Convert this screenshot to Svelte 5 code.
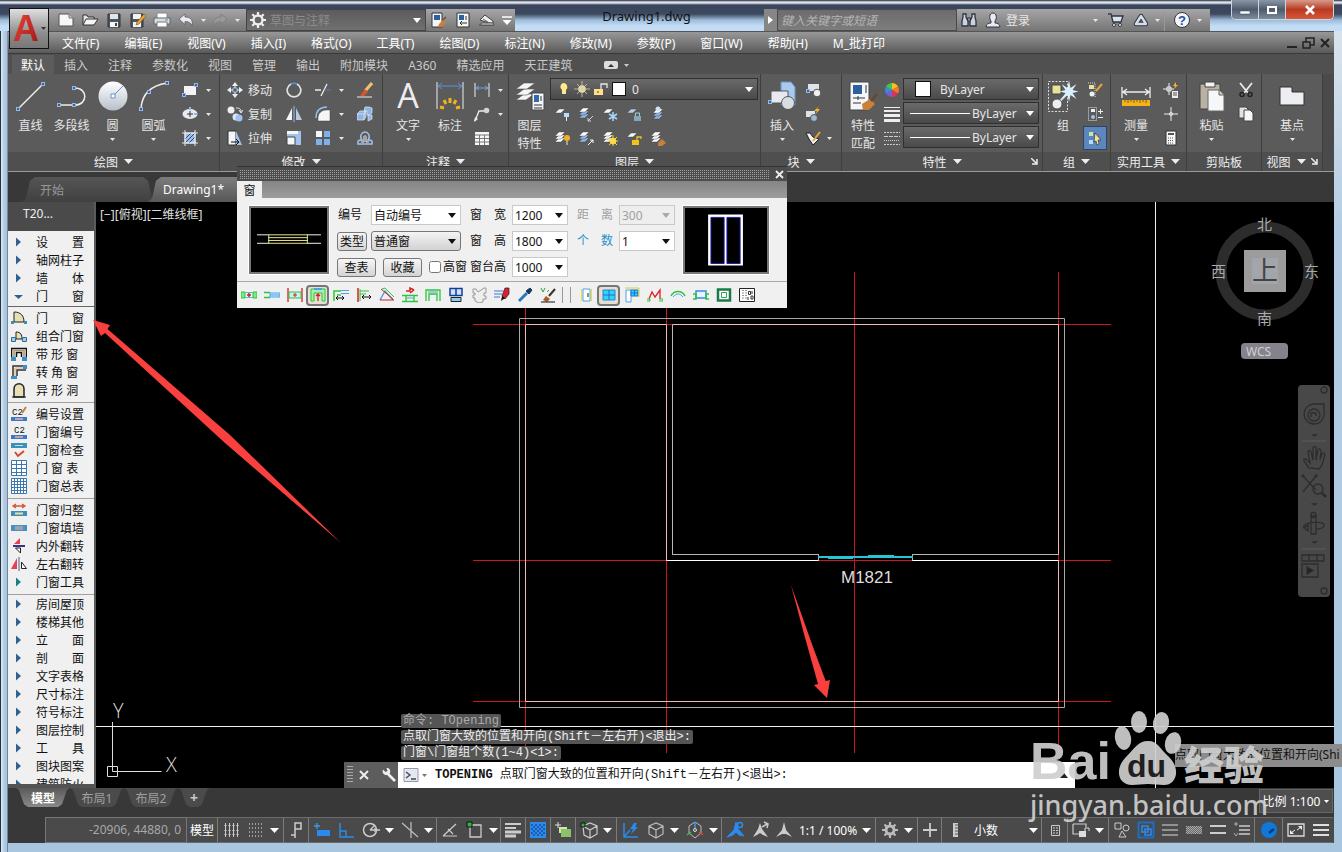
<script>
  const node = (x, y) => `<rect x="${x - 1.5}" y="${y - 1.5}" width="3" height="3" fill="#4a5f80" stroke="#8fbcf0"/>`;
  const sheet = (x, y, f = '#f4f6f8') => `<path d="M${x} ${y + 4}l4-4h6l-4 4z" fill="${f}" stroke="#3a3a3a" stroke-width=".4"/>`;
  const stack = (f) => sheet(1, 8, f) + sheet(1, 5, f) + sheet(1, 2, '#fff');
  const wallEnds = '<path d="M0 5h4v6h-4zM12 5h4v6h-4z" fill="#7dea80" stroke="#2fc53a"/>';

  const icons = {
    // quick access
    newfile: [16, 16, '<path d="M1 2h10l4 4v8h-14z" fill="#f7f7f7" stroke="#555"/><path d="M11 2v4h4" fill="#ccc" stroke="#777"/>'],
    open: [18, 16, '<path d="M2 13v-10h4l1 2h6v2" fill="#e4e4e4" stroke="#333"/><path d="M2 13l3-6h12l-4 6z" fill="#f5f5f5" stroke="#333"/>'],
    save: [16, 16, '<path d="M2 2h12v13h-12z" fill="#4d545c" stroke="#333"/><path d="M4 2h8v5h-8z" fill="#dfe7ee"/><path d="M4 10h8v5h-8z" fill="#f5f5f5"/><path d="M9 11h2v3h-2z" fill="#444"/>'],
    saveas: [18, 16, '<path d="M2 2h12v13h-12z" fill="#4d545c" stroke="#333"/><path d="M4 2h8v5h-8zM4 10h8v5h-8z" fill="#f0f3f6"/><path d="M15 2l2 2-7 8-3 1 1-3z" fill="#e9a43a" stroke="#7a4a10" stroke-width=".6"/>'],
    print: [18, 16, '<path d="M4 1h10v6h-10z" fill="#fff" stroke="#888"/><path d="M1 6h16v6h-16z" fill="#d9dde2" stroke="#666"/><path d="M4 10h10v5h-10z" fill="#fff" stroke="#777"/><path d="M12 8h3" stroke="#4b8bd8"/>'],
    undo: [16, 16, '<path d="M1 7l6-5v3c6 0 8 3 7 9-1-3-3-4.500-7-4.500v3z" fill="#e8ebef" stroke="#555" stroke-width=".7"/>'],
    redo: [16, 16, '<path d="M15 7l-6-5v3c-6 0-8 3-7 9 1-3 3-4.500 7-4.500v3z" fill="#999" stroke="#777" stroke-width=".7"/>'],
    gear: [16, 16, '<circle cx="8" cy="8" r="4.500" fill="none" stroke="#eee" stroke-width="2.400"/><path d="M8 0v3M8 13v3M0 8h3M13 8h3M2.300 2.300l2 2M11.700 11.700l2 2M13.700 2.300l-2 2M4.300 11.700l-2 2" stroke="#eee" stroke-width="2.200"/>'],
    match: [16, 16, '<path d="M1 1h10v14h-10z" fill="#f3f5f7" stroke="#333"/><path d="M3 3h6v5h-6z" fill="#2f5f9f"/><path d="M8 12l4-4 3 3-4 4h-4z" fill="#c9803a"/><path d="M12 8l3-3" stroke="#7a4a20" stroke-width="1.500"/>'],
    sheetset: [14, 16, '<path d="M1 1h12v14h-12z" fill="#f3f5f7" stroke="#333"/><path d="M3 3h5v5h-5z" fill="#2f5f9f"/><path d="M4 11h7M6 9l-2 2 2 2M10 4v4" stroke="#333" fill="none"/>'],
    plotter: [18, 16, '<path d="M1 13h15" stroke="#444"/><path d="M2 8l5-5 8 6v2h-4z" fill="#eee" stroke="#444"/><path d="M3 11h12l1 2h-13z" fill="#ddd" stroke="#555"/><path d="M5 7l5 3" stroke="#666"/>'],
    overflow: [12, 12, '<path d="M1 3h10" stroke="#fff" stroke-width="1.500"/><path d="M1.500 6h9l-4.500 5z" fill="#fff"/>'],
    binoc: [18, 16, '<path d="M3 2h3v3l2 4v5h-6v-5l1-4zM12 2h3v3l1 4v5h-6v-5l2-4z" fill="#cfd4dc" stroke="#2d3545" stroke-width="1.300"/><path d="M7.500 6h3v3h-3z" fill="#8a94a4" stroke="#2d3545"/>'],
    user: [16, 18, '<path d="M1 16c0-3 3-4 5-4v-2c-2-2-2-8 2-8s4 6 2 8v2c2 0 5 1 5 4z" fill="#e8ebef" stroke="#2d3545"/>'],
    cart: [18, 16, '<path d="M1 2h3l2 8h8l2-6h-11" fill="#dfe3ea" stroke="#2d3545" stroke-width="1.300"/><circle cx="7" cy="13" r="1.500" fill="#fff" stroke="#2d3545"/><circle cx="13" cy="13" r="1.500" fill="#fff" stroke="#2d3545"/>'],
    a360: [18, 16, '<path d="M9 4l5 8h-10z" fill="none" stroke="#2d3545" stroke-width="4.500" stroke-linejoin="round"/><path d="M9 4l5 8h-10z" fill="none" stroke="#d6dbe4" stroke-width="2.500" stroke-linejoin="round"/>'],
    help: [18, 18, '<circle cx="9" cy="9" r="7.500" fill="#f4f6fa" stroke="#2d3545"/><text x="9" y="14" text-anchor="middle" font-family="Liberation Sans" font-weight="bold" font-size="13" fill="#1d4fa0">?</text>'],
    // large ribbon
    line: [32, 32, `<path d="M3 29L28 4" stroke="#eee" stroke-width="1.500"/>${node(3, 29)}${node(28, 4)}`],
    pline: [32, 32, `<path d="M3 25h16c13 0 13-17 0-17" fill="none" stroke="#eee" stroke-width="1.500"/>${node(3, 25)}${node(18, 25)}${node(18, 8)}`],
    circle: [32, 32, `<defs><linearGradient id="cg" x2="0" y2="1"><stop stop-color="#fff"/><stop offset="1" stop-color="#b9c0ca"/></linearGradient></defs><circle cx="16" cy="16" r="14.500" fill="url(#cg)"/><path d="M16 16L26 6" stroke="#5a93dc"/><path d="M14 14h4v4h-4z" fill="#fff" stroke="#5a93dc"/>`],
    arc: [32, 32, `<path d="M3 29Q4 7 29 3" fill="none" stroke="#eee" stroke-width="1.500"/>${node(3, 29)}${node(11, 12)}${node(29, 3)}`],
    text: [32, 32, '<text x="16" y="28" text-anchor="middle" font-family="Open Sans" font-size="34" fill="#eceef2">A</text>'],
    dim: [32, 32, '<path d="M3 2v27M29 2v27" stroke="#eee"/><path d="M4 6h24M8 3l-4 3 4 3M24 3l4 3-4 3" stroke="#5a93dc" fill="none"/><path d="M16 18v5M10 20l2 4M22 20l-2 4M6 27l4 1M26 27l-4 1" stroke="#f2b21e" stroke-width="3"/>'],
    layers: [32, 32, '<g stroke="#555" stroke-width=".6" fill="#f4f6f8"><path d="M2 20l8-6h10l-8 6z"/><path d="M2 15l8-6h11l-8 6z"/><path d="M2 9l8-6h11l-8 6z"/></g><path d="M18 13h12v17h-12z" fill="#f4f6f8" stroke="#444"/><path d="M20 15h5v7h-5z" fill="#3468b0"/><path d="M20 25h8M20 28h8M27 16v5" stroke="#333"/>'],
    insert: [32, 32, `<path d="M15 2h10l4 5v18h-14z" fill="#a9c9ee" stroke="#6e96c6"/><path d="M5 11h17v12h-17z" fill="#e6eaf0" stroke="#555"/><circle cx="22" cy="23" r="6.500" fill="#d8dde4" stroke="#555"/>${node(4, 22)}`],
    matchbig: [32, 32, '<path d="M3 2h19v28h-19z" fill="#f4f6f8" stroke="#444"/><path d="M6 5h9v9h-9z" fill="#2f5f9f"/><path d="M6 18h12M6 23h8M11 16v4M19 5v8" stroke="#333"/><path d="M15 24l8-5 5 5-6 6h-6z" fill="#c9803a"/><path d="M24 21l6-7" stroke="#6b4526" stroke-width="2.500"/>'],
    group: [32, 32, '<path d="M1.500 1.500h19v30h-19z" fill="none" stroke="#ddd" stroke-dasharray="2 1.500"/><path d="M5 5h9v9h-9z" fill="#e8e29a" stroke="#444"/><path d="M13 21l9-9" stroke="#ddd" stroke-width="2"/><circle cx="10" cy="24" r="5" fill="#eef1f4" stroke="#555"/><path d="M22 0l1.500 8 6-4-4 6 6 1.500-6 1.500 4 6-6-4-1.500 7-1.500-7-6 4 4-6-6-1.500 6-1.500-4-6 6 4z" fill="#d9f0ff"/>'],
    measure: [32, 32, '<path d="M2 7v11M30 7v11M3 12h26M7 9l-4 3 4 3M25 9l4 3-4 3" fill="none" stroke="#eee" stroke-width="1.300"/><path d="M2 20h28v6h-28z" fill="#f2b21e"/><path d="M5 20v2M8 20v3M11 20v2M14 20v3M17 20v2M20 20v3M23 20v2M26 20v3" stroke="#8a5a00"/>'],
    paste: [32, 32, '<path d="M4 4h20v25h-20z" fill="#b9b2a4" stroke="#444"/><path d="M9 2h10v5h-10z" fill="#f4f4f4" stroke="#444"/><path d="M12 10h11l5 5v16h-16z" fill="#f6f7f8" stroke="#666"/><path d="M23 10v5h5" fill="#ccc" stroke="#666"/>'],
    base: [32, 32, '<path d="M4 7h12v5h12v13h-24z" fill="#eceef2" stroke="#333"/>'],
    // small ribbon
    rect: [16, 16, `<path d="M2 4h12v9h-12z" fill="#f1f3f5"/>${node(2, 13)}${node(14, 3)}`],
    ellipse: [16, 16, '<ellipse cx="8" cy="8" rx="7.500" ry="5" fill="#e6e9ee"/><path d="M8 5v6M5 8h6" stroke="#333"/><path d="M8 1v3M15 8h-3" stroke="#8fbcf0" stroke-width="2"/>'],
    hatch: [16, 16, '<path d="M3 3h10v10h-10z" fill="#9fbde6" stroke="#eee"/><path d="M3 9l6-6M3 13L13 3M7 13l6-6" stroke="#2c4c80"/><path d="M0 3h16M0 13h16M3 0v16M13 0v16" stroke="#e6e9ee"/>'],
    move: [16, 16, '<path d="M8 0l3 4h-6zM8 16l3-4h-6zM0 8l4-3v6zM16 8l-4-3v6z" fill="#eef1f4"/><path d="M6 6h4v4h-4z" fill="none" stroke="#8fbcf0"/><path d="M8 3v3M8 10v3M3 8h3M10 8h3" stroke="#eee"/>'],
    copy: [16, 16, '<circle cx="4" cy="4" r="3.500" fill="#eef1f4"/><circle cx="9" cy="11" r="3.500" fill="#dfe6ef"/><circle cx="12" cy="12" r="3.500" fill="#9fc2ee"/><path d="M9 2c4 0 5 1 5 4M12 4l2 3 2-3" fill="none" stroke="#eee"/>'],
    stretch: [16, 16, '<path d="M1 1h8v14h-8z" fill="#f4f6f8" stroke="#333"/><path d="M9 1l6 14h-6z" fill="#9fc2ee"/><path d="M4 12h8M9 9l3 3-3 3" fill="none" stroke="#111"/>'],
    rotate: [16, 16, '<path d="M5 2a6.800 6.800 0 1 0 6 0" fill="none" stroke="#dfe3e8" stroke-width="1.700"/><path d="M5 2c2-1 4-1 6 0" fill="none" stroke="#5a93dc" stroke-width="1.500"/>'],
    mirror: [16, 16, '<path d="M6 2v12h-6z" fill="#f4f6f8"/><path d="M10 2v12h6z" fill="#b9c9de"/><path d="M8 0v16" stroke="#8fbcf0"/>'],
    scale: [16, 16, '<path d="M1 1h14v14h-14z" fill="#9fc2ee"/><path d="M1 1h11v3h-11z" fill="#f4f6f8"/><path d="M1 7h8v8h-8z" fill="#f4f6f8" stroke="#444"/>'],
    trim: [16, 16, '<path d="M0 8h6M12 2l-6 12" stroke="#eee" stroke-width="1.300"/><path d="M9 8h7" stroke="#5a93dc" stroke-dasharray="2 1"/>'],
    fillet: [16, 16, '<path d="M1 12c0-7 4-11 11-11" fill="none" stroke="#8fbcf0" stroke-width="1.500"/><path d="M3 15v-3c0-5 4-8 8-8h4v11z" fill="#f4f6f8" stroke="#444" stroke-width=".5"/>'],
    array: [16, 16, '<path d="M1 1h6v6h-6z" fill="#f4f6f8"/><path d="M9 1h6v6h-6zM1 9h6v6h-6zM9 9h6v6h-6z" fill="#7fb0ea"/>'],
    erase: [16, 16, '<path d="M0 15h15" stroke="#eee"/><path d="M15 1l-7 8" stroke="#f2c26a" stroke-width="3"/><path d="M8 7l3 3-4 4h-4z" fill="#d9542a"/>'],
    explode: [16, 16, '<path d="M0 8h7v6h-7zM0 8l3-3h6l-2 3M7 8l2-3v6l-2 3M8 1h4l3 1v5l-3 2h-2v-4h-3zM11 9h4v4l-4 2z" fill="#8fb4e4" stroke="#e0eaf8" stroke-width=".7"/>'],
    offset: [16, 16, '<path d="M1 14c-1-4 2-4 4-4-3-4 0-8 3-8s6 4 3 8c2 0 5 0 4 4z" fill="none" stroke="#9fc2ee" stroke-width="1.500"/><path d="M4 12h3v-4c-1-3 3-3 2 0v4h3" fill="none" stroke="#eee"/>'],
    lindim: [16, 16, '<path d="M1 1v14M15 1v14" stroke="#eee"/><path d="M2 6h12M5 4L2 6l3 2M11 4l3 2-3 2" fill="none" stroke="#6fa5e8"/>'],
    leader: [16, 16, '<path d="M1 15l4-10h5" fill="none" stroke="#eee" stroke-width="1.300"/><circle cx="12.500" cy="4.500" r="2.800" fill="#cfd4da"/><path d="M0 16l1-5 3 2z" fill="#eee"/>'],
    table: [16, 16, '<path d="M1 2h14v13h-14z" fill="#f4f6f8"/><path d="M1 5h14M1 8.500h14M1 12h14M5.500 5v10M10.500 5v10" stroke="#777"/>'],
    lyOff: [16, 16, sheet(1, 3) + '<path d="M10 7h5v4h-5z" fill="#b8dcff"/><path d="M12.500 11v4" stroke="#eee"/>'],
    lyIso: [16, 16, stack('#8fb4e4') + '<path d="M15 10l-5 5M10 12v3h3" fill="none" stroke="#cfd4da"/>'],
    lyFrz: [16, 16, sheet(1, 3) + '<path d="M11 6v9M7 8l8 5M15 8l-8 5" stroke="#a8d8ff" stroke-width="1.500"/>'],
    lyLock: [16, 16, sheet(1, 3, '#b9c9de') + '<path d="M8 10h7v5h-7z" fill="#7fa8b8"/><path d="M9.500 10v-3h4v3" fill="none" stroke="#a9c9d8"/>'],
    lyCur: [16, 16, '<g transform="translate(2 1)">' + stack('#8fb4e4') + '</g><circle cx="8" cy="3" r="2.500" fill="#cfe2fa"/>'],
    lyOn: [16, 16, stack('#f4f6f8') + '<circle cx="13" cy="8" r="3" fill="#f2b21e"/><path d="M13 11v4" stroke="#eee"/>'],
    lyUniso: [16, 16, stack('#8fb4e4') + '<path d="M10 15l5-5M12 10h3v3" fill="none" stroke="#fff"/>'],
    lyThaw: [16, 16, stack('#f4f6f8') + '<circle cx="11" cy="11" r="3.200" fill="#ffd84a"/><path d="M11 5v12M5 11h12M7 7l8 8M15 7l-8 8" stroke="#ffd84a"/>'],
    lyUnlock: [16, 16, sheet(1, 3) + '<path d="M6 10h7v5h-7z" fill="#f2c21e"/><path d="M11 10v-3h4v2" fill="none" stroke="#f2c21e" stroke-width="1.300"/>'],
    lyMatch: [16, 16, stack('#f4f6f8') + '<path d="M8 13l4-4 4 4-4 3h-4z" fill="#c9803a"/>'],
    createblk: [16, 16, `<path d="M3 2h11v7h-11z" fill="#dfe3e8"/><circle cx="12" cy="11" r="3.800" fill="#eef1f4" stroke="#555"/>${node(3, 9)}`],
    editblk: [16, 16, '<path d="M1 5h9v6h-9z" fill="#dfe3e8"/><circle cx="9" cy="12" r="3.500" fill="#9fb8d8" stroke="#555"/><path d="M14 0l-5 5h3l-2 4 5-6h-3z" fill="#ffb02e"/>'],
    attr: [16, 16, '<path d="M1 3h4l3 4 6 2-6 6-4-6z" fill="#eef1f4" stroke="#222"/><path d="M15 2l-7 9" stroke="#e9a43a" stroke-width="2"/>'],
    wheel: [16, 16, '<path d="M8 8V1a7 7 0 0 1 6 3.500z" fill="#f2c21e"/><path d="M8 8l6-3.500a7 7 0 0 1 0 7z" fill="#f07a2a"/><path d="M8 8l6 3.500a7 7 0 0 1-6 3.500z" fill="#d9345a"/><path d="M8 8v7a7 7 0 0 1-6-3.500z" fill="#7a5ad0"/><path d="M8 8l-6 3.500a7 7 0 0 1 0-7z" fill="#3a8ae0"/><path d="M8 8L2 4.500a7 7 0 0 1 6-3.500z" fill="#4ac04a"/>'],
    lweight: [16, 16, '<path d="M0 1.500h16" stroke="#eee"/><path d="M0 5h16" stroke="#eee" stroke-width="2"/><path d="M0 9.500h16M0 14.500h16" stroke="#eee" stroke-width="3"/>'],
    ltype: [16, 16, '<path d="M0 2.500h16M0 14.500h16" stroke="#ccc" stroke-dasharray="2 1"/><path d="M0 6.500h16" stroke="#ccc" stroke-dasharray="4 1"/><path d="M0 10.500h16" stroke="#ccc" stroke-dasharray="1 1"/>'],
    ungroup: [16, 16, '<path d="M2 3h5v4h-5z" fill="#e8e29a"/><circle cx="5" cy="12" r="2.500" fill="#eef1f4"/><path d="M1 1h7v14" fill="none" stroke="#ddd" stroke-dasharray="1 1"/><path d="M15 2l-6 7" stroke="#e9a43a" stroke-width="2"/>'],
    groupedit: [16, 16, '<path d="M1.500 1.500h8v13h-8z" fill="none" stroke="#ddd" stroke-dasharray="1 1"/><path d="M4 3h4v3h-4z" fill="#eee"/><circle cx="6" cy="11" r="2" fill="#9fc2ee"/><path d="M11 5.500h5M13.500 3v5M11 11.500h5" stroke="#eee"/>'],
    groupsel: [16, 16, '<path d="M2 2h4v4h-4z" fill="#c6e8a0"/><path d="M2 10h4v4h-4z" fill="#b8dcff"/><path d="M8 3l6 7h-3l1 4-2 1-1-4-2 1z" fill="#f0e6a0" stroke="#222" stroke-width=".6"/>'],
    idpt: [16, 16, '<path d="M6 1v12M0 7h11" stroke="#eee"/><path d="M4 5h4v4h-4z" fill="none" stroke="#eee"/><path d="M13 0l-3 4h2l-1 3 4-4h-2z" fill="#ffb02e"/><path d="M9 9h6v7h-6z" fill="#eee"/><path d="M10 11h4M10 13h4" stroke="#555"/>'],
    point: [16, 16, '<path d="M8 1v14M1 8h14" stroke="#eee"/><circle cx="8" cy="8" r="1.500" fill="#bbb" stroke="#eee"/>'],
    calc: [12, 16, '<path d="M1 1h10v14h-10z" fill="#f4f6f8" stroke="#333"/><path d="M3 3h6v2h-6z" fill="#555"/><path d="M3 8h6M3 10.500h6M3 13h6" stroke="#555" stroke-dasharray="1 1"/>'],
    cut: [16, 16, '<path d="M2 1l8 10M14 1L6 11" stroke="#eee" stroke-width="1.700"/><circle cx="4" cy="12.500" r="2" fill="none" stroke="#222" stroke-width="1.500"/><circle cx="12" cy="12.500" r="2" fill="none" stroke="#222" stroke-width="1.500"/>'],
    clip: [16, 16, '<path d="M1 1h7l2 2v9h-9z" fill="#dfe3e8" stroke="#444"/><path d="M6 4h6l3 3v8h-9z" fill="#f6f7f8" stroke="#444"/>'],
    layerstate: [52, 16, '<path d="M6 2a4 4 0 0 1 3 7v4h-4v-4a4 4 0 0 1 1-7z" fill="#ffe98a"/><circle cx="25" cy="8" r="3.800" fill="#e8dca8"/><path d="M25 0v16M17 8h16M20 3l10 10M30 3L20 13" stroke="#d8cfa8" stroke-width=".8"/><path d="M37 8h9v6h-9z" fill="#ffe08a"/><path d="M44 8v-5h6v4" fill="none" stroke="#e8e8e8" stroke-width="1.300"/><path d="M41 10v2" stroke="#554400"/>'],
    // palette
    door: [16, 16, '<path d="M3 2c7 0 10 4 10 10h-10z" fill="#e6e0b4" stroke="#222"/><path d="M0 11h3v3h-3zM13 11h3v3h-3z" fill="#3c8fb8"/>'],
    combo: [16, 16, '<path d="M5 4c5 0 6 3 6 7h-6z" fill="#e6e0b4" stroke="#222"/><path d="M.5 9.500h4v4h-4zM11.500 9.500h4v4h-4z" fill="#9fd0ea" stroke="#2a6f98"/>'],
    strip: [16, 16, '<path d="M.5 11v-8.500h15v8.500M5.500 11v-4.500h5v4.500" fill="none" stroke="#111" stroke-width="1.500"/><path d="M3 11v-6.500h10v6.500" fill="none" stroke="#a8946a" stroke-width="1.500"/><path d="M0 11h5v4h-5zM11 11h5v4h-5z" fill="#3c8fc8"/>'],
    corner: [16, 16, '<path d="M2 12v-10h13M6 12v-6h9" fill="none" stroke="#333" stroke-width="1.500"/><path d="M4 12v-8h11" fill="none" stroke="#d8a868"/><path d="M0 12h6v3h-6zM12 1h4v4h-4z" fill="#3c8fc8"/>'],
    arch: [16, 16, '<path d="M3 15v-8c0-7 10-7 10 0v8z" fill="#e6e0b4" stroke="#222" stroke-width="1.500"/><path d="M1 15h14" stroke="#222"/>'],
    numset: [16, 16, '<text x="1" y="9" font-family="Liberation Mono" font-size="9" fill="#111">C2</text><path d="M15 1l-4 6" stroke="#b8863a" stroke-width="2"/><path d="M0 11h16v4h-16z" fill="#3c78c8"/><path d="M4 13h8" stroke="#f0b0b0" stroke-width="1.500"/>'],
    num: [16, 16, '<text x="3" y="9" font-family="Liberation Mono" font-size="9" fill="#111">C2</text><path d="M0 11h16v4h-16z" fill="#3c78c8"/><path d="M4 13h8" stroke="#f0b0b0" stroke-width="1.500"/>'],
    check: [16, 16, '<path d="M0 1h16v5h-16z" fill="#3c8fb8"/><path d="M4 3.500h8" stroke="#bfe0f0"/><path d="M4 10l3 4 6-5" fill="none" stroke="#d8402a" stroke-width="1.800"/>'],
    tbl: [16, 16, '<path d="M.5.5h15v15h-15zM0 4.500h16M0 8.500h16M0 12.500h16M5.500 0v16M10.500 0v16" fill="#fff" stroke="#3c78b0"/>'],
    tbl2: [16, 16, '<path d="M.5.5h15v15h-15zM0 3.500h16M0 6.500h16M0 9.500h16M0 12.500h16M3.500 0v16M6.500 0v16M9.500 0v16M12.500 0v16" fill="#fff" stroke="#3c78b0"/>'],
    regular: [16, 16, '<path d="M3 4h10M5 2L2 4l3 2M11 2l3 2-3 2" fill="none" stroke="#d8503a" stroke-width="1.300"/><path d="M0 9h16v5h-16z" fill="#3c8fb8"/><path d="M4 11.500h8" stroke="#f0e0a0" stroke-width="2"/>'],
    fill: [16, 16, '<path d="M0 5h16v6h-16z" fill="#4a8fc0"/><path d="M4 6h8v4h-8z" fill="#9aa4ae"/>'],
    flipv: [16, 16, '<path d="M9 0v6h-6z" fill="#e84050"/><path d="M2 8h12" stroke="#2a1a80" stroke-width="1.800"/><path d="M9.500 15v-5h-5z" fill="#fff" stroke="#222"/>'],
    fliph: [16, 16, '<path d="M6 2v11h-6z" fill="#e84050"/><path d="M8 1v14" stroke="#4a5a90"/><path d="M10.500 6v6.500h5z" fill="#fff" stroke="#222"/>'],
    right: [16, 16, '<path d="M5 3.500v9l5-4.500z" fill="#31628f"/>'],
    rightg: [16, 16, '<path d="M5 3.500v9l5-4.500z" fill="#1a7f80"/>'],
    down: [16, 16, '<path d="M3 7h9l-4.500 4z" fill="#31628f"/>'],
    // dialog toolbar
    d1: [16, 16, wallEnds + '<path d="M4 5.500h8M4 10.500h8" stroke="#4cc0e8"/><path d="M6 8h4M8 6v4" stroke="#d82020" stroke-width="1.500"/>'],
    d2: [16, 16, '<path d="M0 5.500h6M0 10.500h6" stroke="#2fc53a" stroke-width="1.500"/><path d="M6 6h10v4h-10zM6 8h10" fill="#c8f0fa" stroke="#4ca0e8"/>'],
    d3: [16, 16, '<path d="M1 1v14M15 1v14" stroke="#d82020" stroke-width="1.300"/><path d="M2 5h12v6h-12z" fill="#c8f0fa" stroke="#2fc53a"/><path d="M6 8h4M8 6v4" stroke="#d82020"/>'],
    d4: [16, 16, '<path d="M1 2h14v12h-3v-8h-8v8h-3z" fill="#a8f0b0" stroke="#2fc53a"/><path d="M4 2h8" stroke="#4ca0e8" stroke-width="2"/><path d="M8 14v-7M6 9l2-2 2 2" fill="none" stroke="#d82020" stroke-width="1.300"/>'],
    d5: [16, 16, '<path d="M1 14v-10h7M4 8h4" fill="none" stroke="#2fc53a" stroke-width="1.500"/><path d="M8 3.500h8M8 6.500h8" stroke="#4ca0e8"/><path d="M3 11h8M5 9l-2 2 2 2M9 9l2 2-2 2" fill="none" stroke="#111"/>'],
    d6: [16, 16, '<path d="M2 1v14" stroke="#d82020" stroke-width="1.500"/><path d="M4 14v-12M4 4h9M4 7h6" fill="none" stroke="#2fc53a"/><path d="M6 10h9M8 8l-2 2 2 2M13 8l2 2-2 2" fill="none" stroke="#111"/>'],
    d7: [16, 16, '<path d="M1 13L6 4l8 9" fill="none" stroke="#4ca0e8" stroke-width="1.500"/><path d="M1 13h14M2 2l12 10" stroke="#d82020"/><path d="M3 2l3-1 9 9" fill="none" stroke="#2fc53a"/>'],
    d8: [16, 16, '<path d="M4 4h4v-3l4 2M8 6l4-3" fill="none" stroke="#d82020" stroke-width="1.500"/><path d="M0 8.500h16M0 14.500h16M4 8v6M12 8v6" stroke="#2fc53a" stroke-width="1.300"/><path d="M4 11h8" stroke="#4ca0e8"/>'],
    d9: [16, 16, '<path d="M1 14v-11h14v11M4 14v-7h8v7" fill="none" stroke="#2fc53a" stroke-width="1.300"/><path d="M3 5h10" stroke="#4ca0e8"/>'],
    d10: [16, 16, '<path d="M2 1.500h12v7h-12zM8 1.500v7" fill="#c8e8fa" stroke="#1a3a9a" stroke-width="1.500"/><path d="M3 10.500h10v4h-10z" fill="#8fd0f0" stroke="#222"/>'],
    d11: [16, 16, '<path d="M4 14v-3h-2v-3h2v-2h-2v-4h3l2 3 3-2 3-2h2v5h-2v3h2v3h-3v3l-4 1z" fill="#eee" stroke="#999"/>'],
    d12: [16, 16, '<path d="M0 4h9M0 7h8M0 10h6" stroke="#3a78d8"/><path d="M11 1h4v6l-4 5-3-3z" fill="#d82030" stroke="#222" stroke-width=".7"/><path d="M8 9l-1 5 4-3z" fill="#111"/>'],
    d13: [16, 16, '<path d="M2 14l8-8" stroke="#2a78b8" stroke-width="3"/><path d="M9 4l3 3 3-4-2-2z" fill="#123a68" stroke="#123a68"/>'],
    d14: [16, 16, '<path d="M1 1l2 4 2-4M7 5l2-2" fill="none" stroke="#2fa53a"/><path d="M15 2L9 9" stroke="#333" stroke-width="2"/><path d="M6 9l4 3-3 3-4-2z" fill="#a85a28"/><path d="M1 15h14" stroke="#111"/>'],
    e1: [16, 16, '<path d="M5 2h7v12h-7z" fill="#fff" stroke="#4ca0e8"/><path d="M10 6v4" stroke="#222"/><path d="M3.500 2v12M13.500 2v12" stroke="#e8e030"/>'],
    e2: [16, 16, '<path d="M2 3h12v10h-12z" fill="#28d8f8" stroke="#3a78d8"/><path d="M8 3v10M2 8h12" stroke="#2a68c8"/>'],
    e3: [16, 16, '<path d="M2 3h5v12h-5z" fill="#fff" stroke="#4ca0e8"/><path d="M7 3h7v6h-7z" fill="#28d8f8" stroke="#2a68c8"/><path d="M10.500 3v6M7 6h7" stroke="#2a68c8"/><path d="M1 1h14M15 1v9" stroke="#d0d040"/>'],
    e4: [16, 16, '<path d="M2 12l3-7 3 5 5-7v9" fill="none" stroke="#d82020" stroke-width="1.300"/><path d="M0 12h3v2h-3M12 12h4v2h-4" fill="none" stroke="#2fc53a"/>'],
    e5: [16, 16, '<path d="M1 9c3-6 11-6 14 0" fill="none" stroke="#2fc53a" stroke-width="1.500"/><path d="M3 10c3-4 7-4 10 0" fill="none" stroke="#4ca0e8"/>'],
    e6: [16, 16, '<path d="M3 4h10v7h-10z" fill="#e8f4fd" stroke="#3a88e8" stroke-width="1.500"/><path d="M0 7h3v5h-3M16 7h-3v5h3" fill="none" stroke="#2fc53a" stroke-width="1.500"/>'],
    e7: [16, 16, '<path d="M2 2.500h12v11h-12z" fill="#fff" stroke="#1a7a4a" stroke-width="2.500"/><path d="M5.500 5.500h5v5h-5z" fill="none" stroke="#2fa55a"/>'],
    e8: [16, 16, '<path d="M.5 1.500h15v13h-15z" fill="#fff" stroke="#222"/><path d="M4 3v10M7 3v10" stroke="#333" stroke-dasharray="1 1.500"/><path d="M9.500 4.500h2v3h-2zM12 9h2v3h-2zM9 10v3M13 4v3" fill="none" stroke="#333"/>'],
    // status
    grid: [18, 18, '<path d="M3.500 2v14M7.500 2v14M11.500 2v14M15.500 2v14" stroke="#ccc"/><path d="M2 4.500h15M2 9.500h15M2 13.500h15" stroke="#999" stroke-dasharray="1 1"/>'],
    snap: [18, 18, '<path d="M2 3h14M2 7h14M2 11h14M2 15h14" stroke="#bbb" stroke-dasharray="1 2" stroke-width="1.300"/>'],
    infer: [18, 18, '<path d="M8 17v-11M8 6v-4h6v6h-6M4 14h4" fill="none" stroke="#ccc" stroke-width="1.500"/>'],
    dyn: [18, 18, '<path d="M4 2v6M1 5h6" stroke="#3a9af0" stroke-width="1.300"/><path d="M4 9h13v6h-13z" fill="#2a8af0"/>'],
    ortho: [18, 18, '<path d="M3 2v14h14M3 10h6v6" fill="none" stroke="#2a8af0" stroke-width="1.500"/>'],
    polar: [18, 18, '<circle cx="8" cy="9" r="6.500" fill="none" stroke="#ccc" stroke-width="1.500"/><path d="M8 9h10M8 9l5-5M13 7v4" fill="none" stroke="#ccc" stroke-width="1.300"/>'],
    iso: [18, 18, '<path d="M1 2l16 14M10 1v16" stroke="#bbb" stroke-width="1.300"/>'],
    otrack: [18, 18, '<path d="M2 15h14M2 15L15 3M7 8l5 5" stroke="#ccc" stroke-width="1.200"/>'],
    osnap: [18, 18, '<path d="M4 4h11v12h-11z" fill="none" stroke="#ccc" stroke-width="1.300"/><path d="M1 1h5v5h-5z" fill="#2fb53a" stroke="#111"/>'],
    lw: [18, 18, '<path d="M1 3h16M1 7h11" stroke="#ccc" stroke-width="2"/><path d="M1 11h16M1 15h11" stroke="#ccc" stroke-width="3"/>'],
    transp: [18, 18, '<path d="M1 1h16v16h-16z" fill="#2a8af0"/><path d="M2 4h14M2 8h14M2 12h14" stroke="#1d5cae" stroke-width="2" stroke-dasharray="2 2"/><path d="M4 6h12M4 10h12M4 14h12" stroke="#1d5cae" stroke-width="2" stroke-dasharray="2 2"/>'],
    cycle: [18, 18, '<path d="M4 1v6M1 4h6" stroke="#ddd"/><path d="M5 6h8v2h-6v4h-2z" fill="#cfe8a8"/><path d="M7 8h10v8h-10z" fill="#8cc06a"/>'],
    osnap3: [18, 18, '<path d="M3 5l7-3 7 3v8l-7 4-6-3zM3 5l7 4 7-4M10 9v8" fill="none" stroke="#ccc" stroke-width="1.200"/><path d="M1 2h4v4h-4z" fill="#2fb53a" stroke="#111"/>'],
    ucs: [18, 18, '<path d="M2 2v14h14M2 16L8 9" fill="none" stroke="#2a8af0" stroke-width="1.500"/><path d="M12 2l-4 6h3l-2 5 7-7h-3l2-4z" fill="#2a8af0"/>'],
    cube: [18, 18, '<path d="M2 5l7-3 7 3v8l-7 4-7-4zM2 5l7 4 7-4M9 9v8" fill="none" stroke="#bbb" stroke-width="1.200"/>'],
    gizmo: [18, 18, '<path d="M3 5l6-4 6 4v7l-6 5-6-5z" fill="none" stroke="#bbb"/><path d="M9 1v6" stroke="#3a9af0" stroke-width="1.500"/><path d="M5 11l-4 3" stroke="#3ac04a" stroke-width="1.500"/><path d="M13 11l4 3" stroke="#e04a3a" stroke-width="1.500"/><circle cx="9" cy="9" r="1.500" fill="#555" stroke="#ddd"/>'],
    annoA: [18, 18, '<path d="M9 1l2 7 6 7-5-1-3-3-3 3-6 2 7-7z" fill="#2a8af0" stroke="#2a8af0"/><circle cx="13" cy="4" r="2.500" fill="none" stroke="#2a8af0" stroke-width="1.500"/>'],
    annoB: [18, 18, '<path d="M8 2l2 6 6 8-5-2-3-2-3 2-4 2 5-8z" fill="#ccc"/><path d="M10 6l5-3M12 1l4 2-1 4" fill="none" stroke="#ccc" stroke-width="1.500"/>'],
    annoC: [18, 18, '<path d="M9 1l2 8 6 7-6-3h-4l-6 3 6-7z" fill="#ccc"/>'],
    cog: [18, 18, '<circle cx="9" cy="9" r="4" fill="none" stroke="#bbb" stroke-width="3"/><path d="M9 1v3M9 14v3M1 9h3M14 9h3M3.500 3.500l2 2M12.500 12.500l2 2M14.500 3.500l-2 2M5.500 12.500l-2 2" stroke="#bbb" stroke-width="2.200"/>'],
    plus: [18, 18, '<path d="M9 2v14M2 9h14" stroke="#ccc" stroke-width="1.800"/>'],
    ruler: [18, 18, '<path d="M6 2h5v14h-5z" fill="#ccc"/><path d="M8 4h3M8 7h3M8 10h3M8 13h3" stroke="#555"/>'],
    props: [18, 18, '<path d="M5.500 4.500h8v10h-8z" fill="none" stroke="#ccc"/><path d="M7 7h5M7 9.500h5M7 12h5" stroke="#ccc" stroke-dasharray="2 1"/>'],
    lockui: [18, 18, '<path d="M1 3h13v3M1 3v10h6" fill="none" stroke="#ccc" stroke-width="1.200"/><path d="M7 10h7v6h-7z" fill="#ddd"/><path d="M13 10v-3h4v3" fill="none" stroke="#ddd"/>'],
    isoobj: [18, 18, '<path d="M2 2h6v6h-6zM6 16l3-6 4 6z" fill="none" stroke="#ccc"/><circle cx="13" cy="7" r="3" fill="none" stroke="#ccc"/>'],
    selbox: [18, 18, '<path d="M1.500 1.500h15v15h-15z" fill="none" stroke="#1f6cc0" stroke-width="2"/><path d="M5 5h6v6h-6zM8 8h6v6h-6z" fill="none" stroke="#2a8af0" stroke-width="1.500"/>'],
    bars: [18, 18, '<path d="M1 4h16M1 9h16M1 14h16" stroke="#aaa" stroke-width="1.300"/>'],
    noise: [18, 18, '<path d="M1 5h16v8h-16z" fill="#666"/><path d="M1 5.500h16M1 7.500h16M1 9.500h16M1 11.500h16" stroke="#aaa" stroke-dasharray="1 1"/><path d="M2 6.500h15M2 8.500h15M2 10.500h15M2 12.500h15" stroke="#aaa" stroke-dasharray="1 1"/>'],
    bars2: [18, 18, '<path d="M1 5h16M1 12h16" stroke="#ccc" stroke-width="2"/>'],
    bars3: [18, 18, '<path d="M6 5h11M6 9h11M6 13h11" stroke="#ccc" stroke-width="1.300"/><path d="M1 3h4M3 1v4M1 12l2 3 2-3" stroke="#aaa" fill="none"/>'],
    accel: [18, 18, '<circle cx="9" cy="9" r="8" fill="#0f78d8"/><path d="M9 12l5-4" fill="none" stroke="#063a78" stroke-width="2.500"/>'],
    full: [18, 18, '<path d="M1 3h16v12h-16z" fill="none" stroke="#ddd" stroke-width="1.300"/><path d="M11 5h4v4zM7 13h-4v-4z" fill="#eee"/><path d="M14 6l-4 3M4 12l4-3" stroke="#eee"/>'],
    menu3: [18, 18, '<path d="M1 4h16M1 9h16M1 14h16" stroke="#ddd" stroke-width="1.800"/>'],
    wrench: [16, 16, '<path d="M7 7l7 7" stroke="#eee" stroke-width="2.600"/><path d="M2 2.500l2.500 2.500 2-1-1-3c4-1 5 5 2 6.500-4 2-7-2-5.500-5z" fill="#eee"/>'],
    prompt: [16, 16, '<path d="M1 1.500h14v13h-14z" fill="#e4e8f0" stroke="#99a"/><path d="M3 5l4 3-4 3M8 12h5" fill="none" stroke="#445" stroke-width="1.300"/>']
  };

  const menus = ['文件(F)', '编辑(E)', '视图(V)', '插入(I)', '格式(O)', '工具(T)', '绘图(D)', '标注(N)', '修改(M)', '参数(P)', '窗口(W)', '帮助(H)', 'M_批打印'];
  const tabs = ['默认', '插入', '注释', '参数化', '视图', '管理', '输出', '附加模块', 'A360', '精选应用', '天正建筑'];

  const palette = [
    [['right', '设　　置'], ['right', '轴网柱子'], ['right', '墙　　体'], ['down', '门　　窗']],
    [['door', '门　　窗'], ['combo', '组合门窗'], ['strip', '带 形 窗'], ['corner', '转 角 窗'], ['arch', '异 形 洞']],
    [['numset', '编号设置'], ['num', '门窗编号'], ['check', '门窗检查'], ['tbl', '门 窗 表'], ['tbl2', '门窗总表']],
    [['regular', '门窗归整'], ['fill', '门窗填墙'], ['flipv', '内外翻转'], ['fliph', '左右翻转'], ['rightg', '门窗工具']],
    [['right', '房间屋顶'], ['right', '楼梯其他'], ['right', '立　　面'], ['right', '剖　　面'], ['right', '文字表格'], ['right', '尺寸标注'], ['right', '符号标注'], ['right', '图层控制'], ['right', '工　　具'], ['right', '图块图案'], ['right', '建筑防火']]
  ];

  // icon, cell width, drop-down arrow, separator on the right
  const status = [
    ['grid', 25], ['snap', 41, 1, 1], ['infer', 25, 0, 1], ['dyn', 25], ['ortho', 24], ['polar', 40, 1], ['iso', 39, 1, 1],
    ['otrack', 26], ['osnap', 38, 1, 1], ['lw', 25, 0, 1], ['transp', 25, 0, 1], ['cycle', 25, 0, 1], ['osnap3', 41, 1, 1],
    ['ucs', 27], ['cube', 38, 1], ['gizmo', 40, 1, 1], ['annoA', 27], ['annoB', 24], ['annoC', 22]
  ];
  const statusMid = [['cog', 42, 1, 1], ['plus', 24, 0, 1], ['ruler', 28]];
  const statusEnd = [
    ['props', 26, 0, 1], ['lockui', 41, 1, 1], ['isoobj', 25], ['selbox', 24], ['bars', 24], ['noise', 24], ['bars2', 24], ['bars3', 25, 0, 1],
    ['accel', 28, 0, 1], ['full', 26], ['menu3', 24]
  ];
  const toolsA = ['d1', 'd2', 'd3', 'd4', 'd5', 'd6', 'd7', 'd8', 'd9', 'd10', 'd11', 'd12', 'd13', 'd14'];
  const toolsB = ['e1', 'e2', 'e3', 'e4', 'e5', 'e6', 'e7', 'e8'];
</script>

{#snippet icon(name)}
  <svg width={icons[name][0]} height={icons[name][1]} viewBox="0 0 {icons[name][0]} {icons[name][1]}" aria-hidden="true">{@html icons[name][2]}</svg>
{/snippet}

{#snippet caret(big)}
  <svg class="caret" width={big ? 9 : 5} height={big ? 5 : 3} viewBox="0 0 10 6" preserveAspectRatio="none" aria-hidden="true"><path d="M0 0h10L5 6z" fill="currentColor" /></svg>
{/snippet}

{#snippet large(name, lines, arrow = true)}
  <button class="large">
    {@render icon(name)}
    {#each lines as l}<span>{l}</span>{/each}
    {#if arrow}{@render caret(false)}{/if}
  </button>
{/snippet}

{#snippet small(name, arrow = false, label = '')}
  <button class="small" aria-label={label || name}>
    {@render icon(name)}
    {#if label}<span>{label}</span>{/if}
    {#if arrow}{@render caret(false)}{/if}
  </button>
{/snippet}

{#snippet foot(title, arrow = true, launcher = false)}
  <div class="foot">
    <button>{title}{#if arrow}{@render caret(true)}{/if}</button>
    {#if launcher}<svg class="launch" width="7" height="7" viewBox="0 0 7 7" aria-hidden="true"><path d="M0 0l5 5M6 1v5h-5" fill="none" stroke="#eee" stroke-width="1.500" /></svg>{/if}
  </div>
{/snippet}

{#snippet cell(item)}
  <button class="cell" class:sep={item[3]} style="width:{item[1]}px" aria-label={item[0]}>
    {@render icon(item[0])}
    {#if item[2]}{@render caret(true)}{/if}
  </button>
{/snippet}

{#snippet field(label, value, tone = '')}
  <label class="field {tone}">
    <span>{label}</span>
    <span class="pick white"><select disabled={tone === 'off'}><option>{value}</option></select></span>
  </label>
{/snippet}

<div class="window">
  <header>
    <button class="app" aria-label="应用程序">
      <svg width="28" height="34" viewBox="0 0 28 34" aria-hidden="true">
        <defs><linearGradient id="ag" x2="1" y2="1"><stop stop-color="#f0493a" /><stop offset="1" stop-color="#9c1512" /></linearGradient></defs>
        <text x="14" y="29" text-anchor="middle" font-family="Liberation Sans" font-weight="bold" font-size="36" fill="url(#ag)">A</text>
      </svg>
      {@render caret(false)}
    </button>
    <div class="title">
      <div class="qat">
        <button aria-label="新建">{@render icon('newfile')}</button>
        <button aria-label="打开">{@render icon('open')}</button>
        <button aria-label="保存">{@render icon('save')}</button>
        <button aria-label="另存为">{@render icon('saveas')}</button>
        <button aria-label="打印">{@render icon('print')}</button>
        <button aria-label="放弃">{@render icon('undo')}</button>
        <button class="tiny" aria-label="放弃列表">{@render caret(false)}</button>
        <button aria-label="重做">{@render icon('redo')}</button>
        <button class="tiny" aria-label="重做列表">{@render caret(false)}</button>
        <label class="pick space">{@render icon('gear')}<select aria-label="工作空间"><option>草图与注释</option></select></label>
        <button aria-label="特性匹配">{@render icon('match')}</button>
        <button aria-label="图纸集">{@render icon('sheetset')}</button>
        <button aria-label="绘图仪">{@render icon('plotter')}</button>
        <button class="tiny" aria-label="自定义">{@render icon('overflow')}</button>
      </div>
      <h1>Drawing1.dwg</h1>
      <div class="info">
        <button class="play" aria-label="展开"><svg width="5" height="8" viewBox="0 0 5 8"><path d="M0 0l5 4-5 4z" fill="#fff" /></svg></button>
        <input type="text" placeholder="键入关键字或短语" aria-label="搜索" />
        <button aria-label="查找">{@render icon('binoc')}</button>
        <button class="login">{@render icon('user')}<span>登录</span>{@render caret(false)}</button>
        <button aria-label="商店">{@render icon('cart')}</button>
        <button class="wide" aria-label="连接">{@render icon('a360')}{@render caret(false)}</button>
        <button class="wide help" aria-label="帮助">{@render icon('help')}{@render caret(false)}</button>
      </div>
      <div class="winbtns">
        <button aria-label="最小化"><svg width="12" height="12"><path d="M1 7h10v3H1z" fill="#fff" stroke="#456" stroke-width=".6" /></svg></button>
        <button aria-label="最大化"><svg width="12" height="12"><path d="M2 3h8v6H2z" fill="none" stroke="#fff" stroke-width="2" /></svg></button>
        <button class="close" aria-label="关闭"><svg width="12" height="12"><path d="M2 2l8 8M10 2l-8 8" stroke="#fff" stroke-width="2.500" /></svg></button>
      </div>
    </div>
    <nav class="menu">
      {#each menus as m}<button>{m}</button>{/each}
      <svg class="docbtns" width="46" height="14" viewBox="0 0 46 14" aria-hidden="true"><path d="M1 11h10M35 3l8 8M43 3l-8 8" stroke="#222" stroke-width="2" /><path d="M17 6h7v6h-7zM20 6V2h8v7h-4" fill="none" stroke="#222" stroke-width="1.500" /></svg>
    </nav>
  </header>

  <nav class="tabs">
    {#each tabs as t, i}<button class:on={i === 0}>{t}</button>{/each}
    <button class="mini" aria-label="最小化功能区"><svg width="14" height="8"><rect width="14" height="8" rx="2" fill="#ddd" /><path d="M4 6l3-3 3 3z" fill="#333" /></svg>{@render caret(false)}</button>
  </nav>

  <section class="ribbon">
    <div class="panel draw">
      <div class="body">
        {@render large('line', ['直线'], false)}
        {@render large('pline', ['多段线'], false)}
        {@render large('circle', ['圆'])}
        {@render large('arc', ['圆弧'])}
        <div class="col">{@render small('rect', true)}{@render small('ellipse', true)}{@render small('hatch', true)}</div>
      </div>
      {@render foot('绘图')}
    </div>
    <div class="panel modify">
      <div class="body">
        <div class="col">{@render small('move', false, '移动')}{@render small('copy', false, '复制')}{@render small('stretch', false, '拉伸')}</div>
        <div class="col">{@render small('rotate')}{@render small('mirror')}{@render small('scale')}</div>
        <div class="col">{@render small('trim', true)}{@render small('fillet', true)}{@render small('array', true)}</div>
        <div class="col">{@render small('erase')}{@render small('explode')}{@render small('offset')}</div>
      </div>
      {@render foot('修改')}
    </div>
    <div class="panel anno">
      <div class="body">
        {@render large('text', ['文字'])}
        {@render large('dim', ['标注'], false)}
        <div class="col">{@render small('lindim', true)}{@render small('leader', true)}{@render small('table')}</div>
      </div>
      {@render foot('注释')}
    </div>
    <div class="panel layer">
      <div class="body">
        {@render large('layers', ['图层', '特性'], false)}
        <div class="col">
          <label class="pick dark">{@render icon('layerstate')}<i class="swatch"></i><select aria-label="图层"><option>0</option></select></label>
          <div class="row">{@render small('lyOff')}{@render small('lyIso')}{@render small('lyFrz')}{@render small('lyLock')}{@render small('lyCur')}</div>
          <div class="row">{@render small('lyOn')}{@render small('lyUniso')}{@render small('lyThaw')}{@render small('lyUnlock')}{@render small('lyMatch')}</div>
        </div>
      </div>
      {@render foot('图层')}
    </div>
    <div class="panel block">
      <div class="body">
        {@render large('insert', ['插入'])}
        <div class="col">{@render small('createblk')}{@render small('editblk')}{@render small('attr', true)}</div>
      </div>
      {@render foot('块')}
    </div>
    <div class="panel props">
      <div class="body">
        {@render large('matchbig', ['特性', '匹配'], false)}
        <div class="col">{@render small('wheel')}{@render small('lweight')}{@render small('ltype')}</div>
        <div class="col grow">
          <label class="pick dark"><i class="swatch big"></i><select aria-label="颜色"><option>ByLayer</option></select></label>
          <label class="pick dark"><i class="rule"></i><select aria-label="线宽"><option>ByLayer</option></select></label>
          <label class="pick dark"><i class="rule"></i><select aria-label="线型"><option>ByLayer</option></select></label>
        </div>
      </div>
      {@render foot('特性', true, true)}
    </div>
    <div class="panel grp">
      <div class="body">
        {@render large('group', ['组'], false)}
        <div class="col hot">{@render small('ungroup')}{@render small('groupedit')}{@render small('groupsel')}</div>
      </div>
      {@render foot('组')}
    </div>
    <div class="panel util">
      <div class="body">
        {@render large('measure', ['测量'])}
        <div class="col">{@render small('idpt')}{@render small('point')}{@render small('calc')}</div>
      </div>
      {@render foot('实用工具')}
    </div>
    <div class="panel clipb">
      <div class="body">
        {@render large('paste', ['粘贴'])}
        <div class="col">{@render small('cut')}{@render small('clip')}</div>
      </div>
      {@render foot('剪贴板', false)}
    </div>
    <div class="panel view">
      <div class="body">{@render large('base', ['基点'])}</div>
      {@render foot('视图', true, true)}
    </div>
  </section>

  <nav class="files">
    <button class="start">开始</button>
    <button class="cur">Drawing1*</button>
  </nav>

  <main>
    <aside>
      <h2>T20...</h2>
      <div class="list">
        {#each palette as g}
          <div class="group">
            {#each g as [ic, label]}
              <button>{@render icon(ic)}<span>{label}</span></button>
            {/each}
          </div>
        {/each}
      </div>
    </aside>

    <div class="canvas">
      <svg class="drawing" width="100%" height="100%" aria-hidden="true">
        <g transform="translate(-96 -202)" fill="none">
          <path d="M473 324.500h638M473 560.500h638M473 701.500h638M525.500 272v481M666.500 272v481M854.500 272v481M1058.500 272v481" stroke="#d0141e" />
          <path d="M519.500 318.500h545v389h-545z" stroke="#a8a8a8" />
          <path d="M525.500 324.500h141v236h152v-6h-146v-230h386v230h-146v6h146v141h-533z" stroke="#efb9b6" />
          <path d="M672.500 325v229.500h146v6M912.500 560.500v-6h146" stroke="#b8b8b8" />
          <path d="M666.500 560.500h152M912.500 560.500h146" stroke="#fff" />
          <path d="M818 557h95" stroke="#27c6d6" stroke-width="2" /><path d="M828 558.500h25M868 555.500h26" stroke="#27c6d6" />
          <path d="M112.500 722v49.500h49M107.500 766.500h10v10h-10z" stroke="#ddd" />
        </g>
        <g transform="translate(-96 -202)" fill="#ddd">
          <text x="841" y="583" font-family="Liberation Sans" font-size="17">M1821</text>
          <text x="113" y="718" font-family="Open Sans" font-weight="300" font-size="20">Y</text>
          <text x="166" y="772" font-family="Open Sans" font-weight="300" font-size="20">X</text>
        </g>
        <path d="M0 524.500h1300M1059.500 0v600" stroke="#f0f0f0" />
      </svg>
      <span class="viewlabel">[−][俯视][二维线框]</span>

      <div class="cube">
        <svg width="110" height="114" viewBox="0 0 110 114" aria-hidden="true"><circle cx="55" cy="57" r="44" fill="none" stroke="#2c2c2c" stroke-width="11" /><path d="M34 36h42v42H34z" fill="#9c9c9c" /><path d="M42 44h26v26H42z" fill="#a2a6aa" /></svg>
        <b class="n">北</b><b class="s">南</b><b class="w">西</b><b class="e">东</b><b class="t">上</b>
      </div>
      <button class="wcs">WCS</button>
      <svg class="navbar" width="32" height="212" viewBox="0 0 32 212" fill="none" stroke="#2d2d2d" stroke-width="1.300" aria-hidden="true">
        <rect x="0" y="0" width="32" height="212" rx="4" fill="#484848" stroke="none" />
        <circle cx="26" cy="5" r="3" /><circle cx="26" cy="206" r="3" />
        <path d="M16 19h10v11a10 10 0 1 1-10-11z" /><circle cx="16" cy="30" r="6" /><path d="M13 32v-4h5v3" />
        <path d="M15 50h3l-1.500 1zM15 119h3l-1.500 1zM15 157h3l-1.500 1z" fill="#222" />
        <path d="M4 56h24M4 164h24" stroke="#555" />
        <path d="M11 83l-5-7c-1-2 1-3 3-1l3 3-2-11c0-2 2-2 3 0l2 8V63c0-2 3-2 3 0v12l2-10c1-2 3-1 3 1l-1 9 2-6c1-2 3-1 3 1l-3 10-3 4z" />
        <path d="M5 91l13 14M18 91L5 107" /><circle cx="20" cy="104" r="5" /><path d="M24 108l4 4" stroke-width="2.500" /><circle cx="5" cy="91" r="1" /><circle cx="18" cy="91" r="1" />
        <path d="M13 131h5v18h-5zM6 143c-3-6 20-8 20-3 0 3-4 4-8 4M6 143l4-3v6z" /><circle cx="15.500" cy="130" r="2.500" />
        <path d="M4 170h22v6H4zM11 170v6M19 170v6M4 179h16v13H4z" /><path d="M9 182v7l6-3.500z" fill="#222" />
      </svg>

      <div class="cmd">
        <p class="old">命令: TOpening</p>
        <p>点取门窗大致的位置和开向(Shift－左右开)&lt;退出&gt;:</p>
        <p>门窗\门窗组个数(1~4)&lt;1&gt;:</p>
        <div class="bar">
          <div class="grab"><i></i>
            <svg width="10" height="10" aria-hidden="true"><path d="M1 1l8 8M9 1L1 9" stroke="#eee" stroke-width="2" /></svg>
            {@render icon('wrench')}
          </div>
          <div class="line">{@render icon('prompt')}{@render caret(false)}<label for="cmdin"><b>TOPENING</b> 点取门窗大致的位置和开向(Shift－左右开)&lt;退出&gt;:</label><input id="cmdin" type="text" /><svg width="8" height="5" aria-hidden="true"><path d="M0 5h8L4 0z" fill="#222" /></svg></div>
        </div>
      </div>
    </div>
  </main>

  <div class="layouts">
    <button class="on">模型</button><button>布局1</button><button>布局2</button><button class="add">+</button>
    <button class="ratio">比例 1:100{@render caret(false)}</button>
  </div>

  <footer>
    <output>-20906, 44880, 0</output>
    <button class="cell sep model">模型</button>
    {#each status as s}{@render cell(s)}{/each}
    <button class="cell sep scale">1:1 / 100%{@render caret(true)}</button>
    {#each statusMid as s}{@render cell(s)}{/each}
    <button class="cell sep units">小数{@render caret(true)}</button>
    {#each statusEnd as s}{@render cell(s)}{/each}
  </footer>

  <section class="dialog" aria-label="窗">
    <div class="grip"><i></i><button aria-label="关闭"><svg width="9" height="9"><path d="M1 1l7 7M8 1L1 8" stroke="#eee" stroke-width="1.800" /></svg></button></div>
    <div class="dtabs"><button>窗</button></div>
    <div class="dbody">
      <svg class="preview" width="80" height="68" viewBox="0 0 80 68" aria-hidden="true"><path d="M6 28.500h12M6 37.500h12M60 28.500h14M60 37.500h14" stroke="#fff" /><path d="M18 28.500h42M18 31.500h42M18 34.500h42M18 37.500h42M18.500 28v10M59.500 28v10" stroke="#f2f09a" /></svg>
      <div class="c1">
        <label class="field"><span>编号</span><span class="pick white"><select><option>自动编号</option></select></span></label>
        <div class="field"><button>类型</button><span class="pick raised"><select aria-label="类型"><option>普通窗</option></select></span></div>
        <div class="field third"><button>查表</button><button>收藏</button><label><input type="checkbox" />高窗</label></div>
      </div>
      <div class="c2">
        {@render field('窗　宽', '1200')}
        {@render field('窗　高', '1800')}
        {@render field('窗台高', '1000')}
      </div>
      <div class="c2">
        {@render field('距　离', '300', 'off')}
        {@render field('个　数', '1', 'blue')}
      </div>
      <svg class="preview" width="86" height="68" viewBox="0 0 86 68" aria-hidden="true"><path d="M24 7h37v54H24z" fill="#fff" /><path d="M27 10h14v49H27zM44 10h14v49H44z" fill="#000" stroke="#1a1ab0" /></svg>
    </div>
    <div class="dtools">
      {#each toolsA as t, i}<button class:on={i === 3} aria-label={t}>{@render icon(t)}</button>{/each}
      <i></i>
      {#each toolsB as t, i}<button class:on={i === 1} aria-label={t}>{@render icon(t)}</button>{/each}
    </div>
  </section>

  <svg class="notes" aria-hidden="true">
    <path d="M93 320l17 5-2.500 4L230 435l111 108L225 443 105 333l-4 3z" fill="#f8403f" />
    <path d="M791 585l22 62 12.700 34 4.300-1-3 18-13-13 4-1-14-50z" fill="#f8403f" />
  </svg>

  <div class="hint">点取门窗大致的位置和开向(Shi</div>

  <div class="mark">
    <div class="top">
      <span class="lat">Bai</span>
      <span class="paw">
        <svg width="70" height="80" viewBox="0 0 70 80" aria-hidden="true"><g fill="#cfcfcf"><ellipse cx="25" cy="12" rx="8" ry="11" /><ellipse cx="47" cy="13" rx="8" ry="11" transform="rotate(10 47 13)" /><ellipse cx="9" cy="28" rx="8" ry="12" transform="rotate(-10 9 28)" /><ellipse cx="59" cy="33" rx="8" ry="11" transform="rotate(15 59 33)" /><path d="M34 31c10 0 12 8 20 15 14 13 8 29-4 29-6 0-10-1-16-1s-10 1-16 1c-14 0-18-16-6-28 9-9 12-16 22-16z" /></g></svg>
        <em>du</em>
      </span>
      <span class="han">经验</span>
    </div>
    <div class="url">jingyan.baidu.com</div>
  </div>
</div>

<style>
  :global(body) { margin: 0; }
  .window, .window button, .window input, .window select { font-family: 'Noto Sans', 'Noto Sans CJK SC', sans-serif; font-size: 12px; }
  .window { position: relative; height: 100vh; overflow: hidden; box-sizing: border-box; display: flex; flex-direction: column; padding: 0 8px 9px; color: #e6e6e6; line-height: 16px;
    background: linear-gradient(90deg, #26333f 1px, #dcebf8 1px, #b2cce4 4px, #a5c3de 7px, #38444f 7px, transparent 8px), linear-gradient(#dfe6ee, #b4cde4 230px, #a8c6e0); }
  button { background: none; border: 0; padding: 0; color: inherit; display: flex; align-items: center; justify-content: center; white-space: nowrap; }
  select { appearance: none; border: 0; background: none; color: inherit; padding: 0; flex: 1; min-width: 0; outline: 0; opacity: 1; }
  h1, h2, p { margin: 0; font-weight: 400; font-size: 12px; }
  svg { display: block; flex: none; }
  i { display: block; flex: none; }

  header { display: grid; grid-template-columns: 41px 1fr; grid-template-rows: 31px 22px; margin: 0 -8px; padding: 0 8px; flex: none;
    background: linear-gradient(#1f2533, #dfe5ec 2px, #dfe5ec 3px, #39455a 5px, #3c4960 14px, #9dbbd8 20px, #c3ddf6 26px, #c3ddf6 31px, transparent 31px); }
  .app { grid-row: 1 / 3; grid-column: 1; margin: 8px 0 4px 1px; border: 1px solid #111; background: linear-gradient(#e0e0e0, #8f8f8f 60%, #777); gap: 1px; z-index: 1; color: #333; }
  .title { grid-column: 2; display: flex; align-items: flex-end; min-width: 0; }
  .qat, .info { display: flex; align-items: center; height: 22px; background: linear-gradient(#a6a6a6, #757575); flex: none; }
  .qat { padding-left: 5px; }
  .qat button, .info button { width: 24px; height: 22px; }
  .qat .tiny { width: 10px; }
  .qat > .tiny:last-child { width: 16px; }
  .pick { position: relative; display: flex; align-items: center; box-sizing: border-box; }
  .pick::after { content: ''; position: absolute; right: 4px; top: 50%; margin-top: -2px; border: 4px solid transparent; border-top: 5px solid #fff; border-bottom: 0; }
  .space { width: 180px; height: 22px; margin: 0 1px 0 4px; background: linear-gradient(#5c5c5c, #707070); border: 1px solid #444; padding-left: 3px; gap: 4px; color: #8c8c8c; }
  h1 { flex: 1; text-align: center; color: #111; align-self: center; font-size: 13px; padding-left: 14px; }
  .info .play { width: 13px; background: #868686; }
  .info input { width: 180px; height: 22px; box-sizing: border-box; background: linear-gradient(#6c6c6c, #7d7d7d); border: 1px solid #4a4a4a; padding: 0 3px; color: #ddd; font-style: italic; }
  .info input::placeholder { color: #b5b5b5; opacity: 1; }
  .info .login { width: 123px; justify-content: flex-start; gap: 5px; padding: 0 6px 0 4px; }
  .login .caret { margin-left: auto; }
  .info .wide { width: 36px; gap: 5px; }
  .info .help { width: 46px; border-left: 1px solid #999; gap: 6px; }
  .winbtns { display: flex; align-self: flex-start; margin: 0 0 0 21px; border: 1px solid #cdd6e0; border-top: 0; border-radius: 0 0 5px 5px; overflow: hidden; }
  .winbtns button { width: 27px; height: 19px; background: linear-gradient(#8b97a6, #4d5a6b 50%, #7d8b9b); border-right: 1px solid #cdd6e0; }
  .winbtns .close { width: 47px; border: 0; background: linear-gradient(#d89a8a, #b83a22 50%, #d8583a); }
  .menu { grid-column: 1 / 3; grid-row: 2; display: flex; align-items: center; justify-content: flex-start; gap: 25px; padding-left: 54px; border-top: 1px solid #555; background: linear-gradient(#989898, #5a5a5a); color: #fff; }
  .docbtns { margin: 0 2px 0 auto; }

  .tabs { display: flex; height: 21px; flex: none; padding: 0 0 0 4px; background: #505050; border-top: 1px solid #3a3a3a; box-sizing: border-box; align-items: flex-end; color: #c9c9c9; }
  .tabs button { padding: 0 10px; height: 18px; }
  .tabs .on { background: #5c5c5c; color: #fff; padding: 0 9px; height: 19px; }
  .tabs .mini { gap: 6px; padding: 0 22px; }

  .ribbon { display: flex; flex: none; height: 98px; background: #4a4a4a; border-bottom: 1px solid #9a9a9a; box-sizing: border-box; }
  .panel { display: flex; flex-direction: column; box-sizing: border-box; background: #5b5b5b; border-right: 1px solid #3e3e3e; flex: none; }
  .body { display: flex; height: 78px; padding-top: 4px; box-sizing: border-box; flex: none; }
  .foot { display: flex; align-items: center; justify-content: center; flex: 1; background: #4f4f4f; position: relative; }
  .foot button { gap: 6px; color: #eee; }
  .launch { position: absolute; right: 4px; bottom: 6px; }
  .large { flex-direction: column; justify-content: flex-start; width: 42px; }
  .large svg:not(.caret) { margin: 2px 0 4px; }
  .large .caret { margin-top: 4px; }
  .col { display: flex; flex-direction: column; }
  .small { height: 24px; gap: 8px; justify-content: flex-start; }
  .row { display: flex; gap: 8px; padding-left: 4px; }
  .draw { width: 212px; }
  .draw .body { padding-left: 2px; }
  .draw .large { width: 41px; }
  .draw .col { padding-left: 8px; }
  .modify { width: 163px; }
  .modify .body { padding-left: 7px; display: grid; grid-template-columns: 59px 29px 42px 24px; }
  .modify .col:first-child .small { gap: 5px; }
  .anno { width: 126px; }
  .anno .body { padding-left: 4px; }
  .anno .col { padding-left: 3px; }
  .layer { width: 252px; }
  .layer .large { width: 41px; }
  .layer .pick { width: 208px; height: 22px; margin-bottom: 2px; padding-left: 6px; }
  .dark { border: 1px solid #303030; background: linear-gradient(#6a6a6a, #4a4a4a); }
  .swatch { width: 12px; height: 12px; background: #fff; border: 1px solid #111; margin: 0 6px 0 3px; }
  .swatch.big { width: 14px; height: 14px; margin: 0 9px 0 11px; }
  .block { width: 81px; }
  .block .col { padding-left: 2px; }
  .block .small { gap: 6px; }
  .props { width: 201px; }
  .props .large { width: 42px; }
  .props .grow { padding-left: 3px; }
  .props .pick { width: 136px; height: 22px; margin-bottom: 2px; }
  .rule { width: 60px; height: 1px; background: #fff; margin: 0 2px 0 6px; }
  .grp { width: 68px; }
  .grp .large { width: 40px; }
  .hot .small { width: 24px; justify-content: center; }
  .hot .small:last-child { background: #5d86bd; outline: 1px solid #2c4468; outline-offset: -1px; }
  .util { width: 76px; }
  .util .large { width: 50px; }
  .util .small, .clipb .small { width: 20px; justify-content: center; }
  .clipb { width: 75px; }
  .clipb .large { width: 49px; }
  .view { width: 61px; }
  .view .large { width: 60px; }
  .view .foot { padding-right: 12px; }

  .files { display: flex; flex: none; height: 30px; background: #383838; align-items: flex-end; padding-left: 14px; box-sizing: border-box; }
  .files button { height: 25px; box-sizing: border-box; justify-content: flex-start; clip-path: polygon(0 100%, 4px 85%, 8px 15%, 13px 0, calc(100% - 13px) 0, calc(100% - 8px) 15%, calc(100% - 4px) 85%, 100% 100%); }
  .start { width: 134px; background: linear-gradient(#555, #404040); padding-left: 18px; color: #999; }
  .files .cur { width: 110px; margin-left: -8px; background: linear-gradient(#7d7d7d, #575757); color: #fff; padding-left: 15px; }

  main { flex: 1; display: flex; min-height: 0; border-left: 0; }
  aside { width: 86px; flex: none; background: #535353; border-right: 2px solid #5a5a5a; display: flex; flex-direction: column; padding-bottom: 4px; }
  h2 { height: 29px; flex: none; line-height: 24px; padding-left: 15px; background: #4a4a4a; color: #eee; }
  .list { flex: 1; min-height: 0; overflow: hidden; background: #f0f0f0; color: #111; }
  .group { padding: 2px 0 3px; border-bottom: 1px solid #a0a0a0; }
  .group button { height: 18px; padding-left: 3px; gap: 9px; white-space: pre; }
  .group:first-child { padding-bottom: 1px; border-color: #666; }
  .group:last-child { padding-top: 0; }

  .canvas { flex: 1; position: relative; background: #000; overflow: hidden; min-width: 0; }
  .drawing { position: absolute; inset: 0; }
  .viewlabel { position: absolute; left: 4px; top: 5px; color: #e0e0e0; }
  .cube { position: absolute; right: 14px; top: 12px; width: 110px; height: 114px; color: #aaa; }
  .cube b { position: absolute; font-weight: 400; font-size: 15px; line-height: 18px; }
  .cube .n { left: 47px; top: 1px; }
  .cube .s { left: 47px; top: 95px; }
  .cube .w { left: 1px; top: 48px; }
  .cube .e { right: 1px; top: 48px; }
  .cube .t { left: 42px; top: 42px; font-size: 26px; line-height: 28px; color: #444; }
  .wcs { position: absolute; right: 46px; top: 141px; width: 47px; height: 16px; border-radius: 4px; background: #85828c; color: #d0d0d4; font-size: 11px; justify-content: flex-start; padding-left: 5px; }
  .navbar { position: absolute; right: 4px; top: 183px; }
  .cmd { position: absolute; left: 248px; bottom: 0; width: 731px; font-family: 'Liberation Mono', 'Noto Sans CJK SC', monospace; display: flex; flex-direction: column; align-items: flex-start; }
  .cmd p { margin: 0 0 2px 57px; background: #555; color: #eee; padding: 0 2px; line-height: 14px; border-radius: 2px; white-space: pre; }
  .cmd .old { color: #aaa; }
  .bar { display: flex; width: 100%; height: 26px; }
  .grab { width: 54px; display: flex; align-items: center; gap: 12px; background: #5d5d5d; box-sizing: border-box; padding-left: 3px; flex: none; }
  .grab i { width: 6px; height: 18px; margin-right: -6px; background: repeating-linear-gradient(#aaa 0 1px, transparent 1px 3px); }
  .line { flex: 1; background: #fff; color: #111; display: flex; align-items: center; padding: 0 7px 0 5px; gap: 3px; min-width: 0; white-space: nowrap; }
  .line label { padding-left: 5px; }
  .line input { flex: 1; min-width: 0; border: 0; outline: 0; padding: 0; background: none; }
  .line .caret { color: #777; }

  .layouts { display: flex; flex: none; height: 29px; background: #383838; align-items: flex-start; padding-left: 8px; color: #a0a0a0; }
  .layouts button { height: 19px; width: 54px; background: #4b4b4b; clip-path: polygon(0 0, 100% 0, calc(100% - 3px) 10%, calc(100% - 8px) 85%, calc(100% - 12px) 100%, 12px 100%, 8px 85%, 3px 10%); }
  .layouts .on { background: linear-gradient(#5a5a5a, #8a8a8a); color: #fff; font-weight: 700; }
  .layouts .add { width: 32px; font-weight: 700; font-size: 14px; color: #ccc; }
  .layouts .ratio { margin: 1px 1px 0 auto; width: 74px; height: 24px; clip-path: none; background: #4e4e4e; border: 1px solid #666; color: #fff; gap: 4px; }

  footer { display: flex; flex: none; height: 26px; background: #4a4a4a; border-left: 37px solid #383838; border-top: 0; box-sizing: border-box; }
  output { width: 142px; flex: none; box-sizing: border-box; border: 1px solid #777; text-align: right; line-height: 24px; padding-right: 5px; color: #a8a8a8; }
  .cell { flex: none; box-sizing: border-box; gap: 5px; border-top: 1px solid #6a6a6a; border-bottom: 1px solid #6a6a6a; color: #fff; }
  .cell.sep { border-right: 1px solid #7c7c7c; }
  .model { width: 31px; }
  .scale { width: 81px; }
  .units { width: 72px; justify-content: space-between; padding: 0 3px 0 4px; }

  .dialog { position: absolute; left: 237px; top: 166px; width: 550px; background: #f0f0f0; color: #111; }
  .grip { height: 15px; display: flex; align-items: center; background: #4c4c4c; border-top: 1px solid #333; box-sizing: border-box; padding: 0 3px 0 2px; gap: 5px; }
  .grip i { flex: 1; height: 10px; background: repeating-linear-gradient(90deg, #4c4c4c 0 1px, transparent 1px 2px), repeating-linear-gradient(#4c4c4c 0 1px, #a0a0a0 1px 2px); }
  .dtabs { height: 17px; background: linear-gradient(#858585, #9c9c9c); display: flex; }
  .dtabs button { width: 25px; background: #f0f0f0; }
  .dbody { display: flex; height: 84px; box-sizing: border-box; padding: 7px 0 0 12px; border-bottom: 1px solid #a8a8a8; gap: 8px; }
  .preview { background: #000; border: 2px solid #777; box-sizing: border-box; outline: 1px solid #fff; margin-top: 1px; }
  .c1, .c2 { display: flex; flex-direction: column; gap: 6px; }
  .c1 { width: 124px; }
  .c2 { width: 99px; }
  .field { display: flex; align-items: center; height: 20px; justify-content: space-between; white-space: pre; }
  .field > span:first-child { padding-left: 1px; }
  .field .pick { width: 56px; height: 20px; border: 1px solid #c9c9c9; background: #fff; padding-left: 2px; }
  .c1 .pick { width: 90px; }
  .field .pick::after { border-top-color: #111; }
  .field .raised { background: linear-gradient(#f4f4f4, #d2d2d2); border: 1px solid #777; border-radius: 3px; }
  .field button { width: 30px; height: 19px; border: 1px solid #777; border-radius: 3px; background: linear-gradient(#f6f6f6, #d4d4d4); box-sizing: border-box; }
  .third button { width: 39px; }
  .third { width: 130px; }
  .third label { display: flex; align-items: center; }
  .third input { margin: 0 2px 0 0; width: 12px; height: 12px; }
  .off { color: #a0a0a0; }
  .off .pick { background: #eee; }
  .off .pick::after { border-top-color: #aaa; }
  .blue > span:first-child { color: #2a8fc8; }
  .blue { color: #111; }
  .dtools { display: flex; height: 26px; align-items: center; }
  .dtools button { width: 23px; height: 21px; box-sizing: border-box; }
  .dtools .on { border: 2px solid #777; border-radius: 4px; background: #e4e0d0; }
  .dtools > i { width: 9px; height: 16px; margin: 0 3px; border: solid #999; border-width: 0 1px; box-sizing: border-box; }

  .notes { position: absolute; inset: 0; width: 100%; height: 100%; pointer-events: none; }
  .hint { position: absolute; left: 1175px; right: 0; top: 744px; height: 23px; line-height: 21px; background: #8c8c8c; color: #111; overflow: hidden; white-space: nowrap; }
  .mark { position: absolute; left: 1030px; top: 710px; pointer-events: none; color: #cfcfcf; opacity: .92; }
  .mark .top { display: flex; align-items: flex-end; height: 78px; }
  .lat { font: bold 52px/54px 'Liberation Sans', sans-serif; }
  .paw { position: relative; margin: 0 0 0 3px; align-self: flex-start; }
  .paw em { position: absolute; left: 13px; top: 36px; font: bold 32px/40px 'Liberation Sans', sans-serif; color: #222; }
  .han { font: 900 40px/50px 'Noto Sans CJK SC', sans-serif; }
  .url { font: 500 27px/34px 'Noto Sans', sans-serif; }
</style>
